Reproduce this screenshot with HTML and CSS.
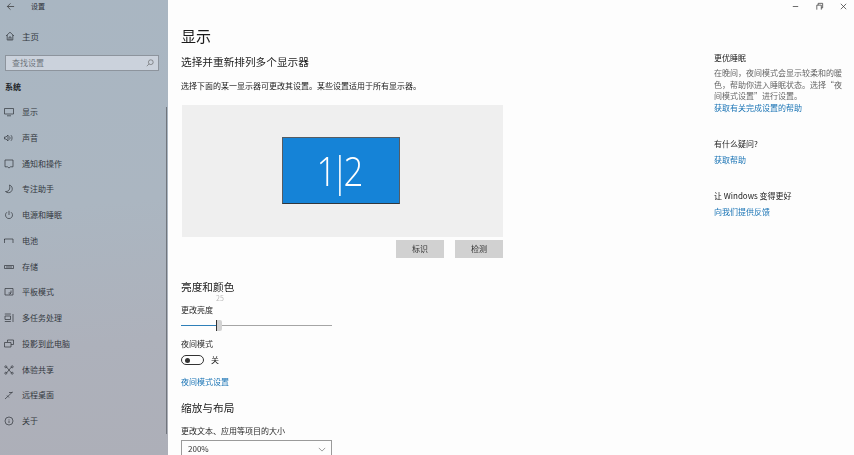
FILE: index.html
```html
<!DOCTYPE html>
<html lang="zh-CN">
<head>
<meta charset="utf-8">
<title>设置</title>
<link rel="stylesheet" href="styles.css">
</head>
<body>
<div class="app">
  <aside class="sidebar">
    <div class="titlebar">
      <svg class="back" viewBox="0 0 10 10"><path d="M9 5H1.500M5 1.500 1.500 5 5 8.500"/></svg>
      <span>设置</span>
    </div>
    <div class="home nav-row">
      <svg class="ico" viewBox="0 0 10 10"><path d="M1 5 5 1.200 9 5M2.200 4v5h5.600V4M4 9V6h2v3"/></svg>
      <span>主页</span>
    </div>
    <div class="search">
      <span>查找设置</span>
      <svg class="search-ico" viewBox="0 0 10 10"><circle cx="6" cy="4" r="3"/><path d="M3.800 6.200 1 9"/></svg>
    </div>
    <div class="group">系统</div>
    <nav class="nav">
      <div class="nav-row"><svg class="ico" viewBox="0 0 10 10"><path d="M.5 1.500h9v5.500h-9zM3 8.800h4"/></svg><span>显示</span></div>
      <div class="nav-row"><svg class="ico" viewBox="0 0 10 10"><path d="M.5 4v2h1.500L4 8V2L2 4zM5.500 3.500c.7.800.7 2.200 0 3M7 2.200c1.400 1.500 1.400 4.100 0 5.600"/></svg><span>声音</span></div>
      <div class="nav-row"><svg class="ico" viewBox="0 0 10 10"><path d="M1 1h8v6.800H6.500L5 9 3.500 7.800H1z"/></svg><span>通知和操作</span></div>
      <div class="nav-row"><svg class="ico" viewBox="0 0 10 10"><path d="M5.500 1c3 1 3.500 4.500 1.800 6.500C5.700 9.200 3 9 1.500 7.500 3.500 7.700 5 6.800 5.600 5c.4-1.300.3-2.800-.1-4z"/></svg><span>专注助手</span></div>
      <div class="nav-row"><svg class="ico" viewBox="0 0 10 10"><path d="M5 .8V5M3 2.200a3.500 3.500 0 1 0 4 0"/></svg><span>电源和睡眠</span></div>
      <div class="nav-row"><svg class="ico" viewBox="0 0 10 10"><path d="M.5 7V3h8.500v4M.5 3v1"/></svg><span>电池</span></div>
      <div class="nav-row"><svg class="ico" viewBox="0 0 10 10"><path d="M.5 3.500h9v3h-9zM2 5h6"/></svg><span>存储</span></div>
      <div class="nav-row"><svg class="ico" viewBox="0 0 10 10"><path d="M7 8H1V1.500h8V8H7M4.500 6H7V3.500M7 6 5.500 7.500"/></svg><span>平板模式</span></div>
      <div class="nav-row"><svg class="ico" viewBox="0 0 10 10"><path d="M.8 1h6M.8 8.500h6M1 3h5.500v3.500H1zM9 1v8"/></svg><span>多任务处理</span></div>
      <div class="nav-row"><svg class="ico" viewBox="0 0 10 10"><path d="M3.500 3V1h6v4.500H7M.5 3.500H7V8H.5z"/></svg><span>投影到此电脑</span></div>
      <div class="nav-row"><svg class="ico" viewBox="0 0 10 10"><path d="M2.500 2 7.500 8M7.500 2 2.500 8"/><circle cx="1.800" cy="1.800" r="1"/><circle cx="8.200" cy="1.800" r="1"/><circle cx="1.800" cy="8.200" r="1"/><circle cx="8.200" cy="8.200" r="1"/></svg><span>体验共享</span></div>
      <div class="nav-row"><svg class="ico" viewBox="0 0 10 10"><path d="M1 9 8.500 2M5 2.500h3.500M3 5.500l2 2"/></svg><span>远程桌面</span></div>
      <div class="nav-row"><svg class="ico" viewBox="0 0 10 10"><circle cx="5" cy="5" r="4"/><path d="M5 4.500v2.500M5 3v.6"/></svg><span>关于</span></div>
    </nav>
    <div class="scrollbar"></div>
  </aside>

  <main class="content">
    <div class="window-controls">
      <svg viewBox="0 0 10 10"><path d="M2 5h6"/></svg>
      <svg viewBox="0 0 10 10"><path d="M2 8.500V3.500h5v5M3.500 3.500V1.500h5v5H7"/></svg>
      <svg viewBox="0 0 10 10"><path d="M2 2l6 6M8 2l-6 6"/></svg>
    </div>
    <div class="columns">
      <section class="primary">
        <h1>显示</h1>
        <h2 class="first">选择并重新排列多个显示器</h2>
        <p class="desc">选择下面的某一显示器可更改其设置。某些设置适用于所有显示器。</p>
        <div class="arrange">
          <div class="monitor"><span>1|2</span></div>
        </div>
        <div class="buttons">
          <button class="btn">标识</button>
          <button class="btn">检测</button>
        </div>
        <h2 class="bright">亮度和颜色</h2>
        <div class="value">25</div>
        <div class="label">更改亮度</div>
        <div class="slider">
          <div class="fill"></div>
          <div class="thumb"></div>
          <div class="track"></div>
        </div>
        <div class="label night">夜间模式</div>
        <div class="toggle-row">
          <div class="toggle"><i></i></div>
          <span>关</span>
        </div>
        <a class="link night-link">夜间模式设置</a>
        <h2 class="scale">缩放与布局</h2>
        <div class="label size">更改文本、应用等项目的大小</div>
        <div class="select">
          <span>200%</span>
          <svg viewBox="0 0 10 6"><path d="M1 1l4 4 4-4"/></svg>
        </div>
      </section>
      <aside class="help">
        <div class="help-title">更优睡眠</div>
        <p class="help-text">在晚间，夜间模式会显示较柔和的暖色，帮助你进入睡眠状态。选择“夜间模式设置”进行设置。</p>
        <a class="link">获取有关完成设置的帮助</a>
        <div class="help-title gap">有什么疑问?</div>
        <a class="link">获取帮助</a>
        <div class="help-title gap">让 Windows 变得更好</div>
        <a class="link">向我们提供反馈</a>
      </aside>
    </div>
  </main>
</div>
</body>
</html>
```

FILE: styles.css
```css
* { box-sizing: border-box; }
html, body { margin: 0; height: 100%; overflow: hidden; }
body {
  font-family: "Noto Sans CJK SC", "Liberation Sans", sans-serif;
  font-size: 8px;
  line-height: 12px;
  color: #222;
  background: #fdfdfd;
}
.app { display: flex; width: 854px; height: 455px; filter: blur(.3px); }

.sidebar {
  position: relative;
  flex: 0 0 168px;
  background: linear-gradient(175deg, #a9b6c2 0%, #abb6c1 45%, #adb1bb 75%, #adafb8 100%);
  color: #2c3036;
}
.titlebar {
  display: flex;
  align-items: center;
  height: 12px;
  padding-left: 6px;
  gap: 16px;
  font-size: 7px;
}
.back { width: 9px; height: 9px; fill: none; stroke: #333; stroke-width: .8; }
.nav-row {
  display: flex;
  align-items: center;
  height: 25.750px;
  padding-left: 4px;
  gap: 8px;
  color: #33383e;
}
.home { margin-top: 11px; padding-left: 5px; gap: 7px; font-size: 8.500px; }
.ico { width: 10px; height: 10px; fill: none; stroke: #30353b; stroke-width: .7; flex: none; }
.search {
  display: flex;
  align-items: center;
  justify-content: space-between;
  margin: 6px 9px 0 5px;
  height: 16.500px;
  padding: 0 4px 0 6px;
  background: #cbd2dc;
  border: 1px solid #8d949d;
  color: #6f757d;
}
.search-ico { width: 8px; height: 8px; fill: none; stroke: #555; stroke-width: .7; }
.group { margin: 9.500px 0 0 5px; height: 14px; font-weight: 700; color: #22262b; }
.nav { margin-top: 4.500px; }
.scrollbar {
  position: absolute;
  right: 1px;
  top: 107px;
  height: 327px;
  width: 1.500px;
  background: #70757c;
}

.content { position: relative; flex: 1; min-width: 0; }
.window-controls {
  position: absolute;
  top: 2px;
  right: 6px;
  display: flex;
  gap: 15px;
}
.window-controls svg { width: 9px; height: 9px; fill: none; stroke: #333; stroke-width: .8; }
.columns { display: flex; padding-left: 13px; }
.primary { flex: 0 0 533px; }
h1, h2, p { margin: 0; font-weight: 400; }
h1 { margin-top: 25px; font-size: 15px; line-height: 22px; color: #1b1b1b; }
h2 { font-size: 10.670px; line-height: 16px; color: #1d1d1d; }
h2.first { margin-top: 7px; }
.desc { margin-top: 10px; color: #222; }
.arrange {
  display: flex;
  width: 321px;
  height: 132px;
  margin: 13px 0 0 1px;
  padding: 32px 0 0 100px;
  background: #efefef;
}
.monitor {
  width: 118px;
  height: 67px;
  background: #1583d7;
  border: 1px solid #555c63;
  border-bottom-color: #30363c;
  color: #fff;
  font-family: "Open Sans", "Liberation Sans", sans-serif;
  font-weight: 300;
  font-size: 41px;
  letter-spacing: -7px;
  line-height: 65px;
  text-align: center;
}
.monitor span { display: inline-block; transform: translateX(-4px) scaleX(.85); }
.buttons { display: flex; justify-content: flex-end; gap: 11px; width: 322px; margin-top: 3px; }
.btn {
  width: 48px;
  height: 18px;
  border: 0;
  padding: 0;
  background: #d1d1d1;
  font: inherit;
  color: #333;
}
h2.bright { margin-top: 21px; }
.value { height: 9px; line-height: 7px; margin-left: 35px; font-size: 7px; color: #bbb; }
.label { color: #2a2a2a; }
.slider { position: relative; display: flex; align-items: center; width: 151px; height: 16px; margin-top: 1px; }
.fill { width: 35px; height: 1px; background: #2f7fb8; }
.track { flex: 1; height: 1px; background: #a5a5a5; }
.thumb { flex: none; width: 6px; height: 11px; background: #d2d2d2; border-left: 1px solid #333; border-radius: 0 2px 2px 0; }
.label.night { margin-top: 5px; }
.toggle-row { display: flex; align-items: center; gap: 7px; margin-top: 4px; height: 12px; }
.toggle {
  display: flex;
  align-items: center;
  width: 23px;
  height: 10px;
  padding-left: 3px;
  border: 1px solid #333;
  border-radius: 5px;
}
.toggle i { width: 5px; height: 5px; border-radius: 50%; background: #333; }
.link { display: block; color: #1a74b5; }
.night-link { margin-top: 10px; }
h2.scale { margin-top: 12px; }
.label.size { margin-top: 9px; }
.select {
  display: flex;
  align-items: center;
  justify-content: space-between;
  width: 151px;
  height: 18px;
  margin-top: 3px;
  padding: 0 5px 0 6px;
  border: 1px solid #9a9a9a;
  color: #333;
}
.select svg { width: 8px; height: 5px; fill: none; stroke: #666; stroke-width: .8; }

.help { flex: 0 0 128px; padding-top: 52px; }
.help-title { color: #222; }
.help-text { margin-top: 3px; color: #666; line-height: 11.500px; }
.help .link { margin-top: 4px; }
.help .help-text + .link { margin-top: 0; }
.help-title.gap { margin-top: 24px; }
```
